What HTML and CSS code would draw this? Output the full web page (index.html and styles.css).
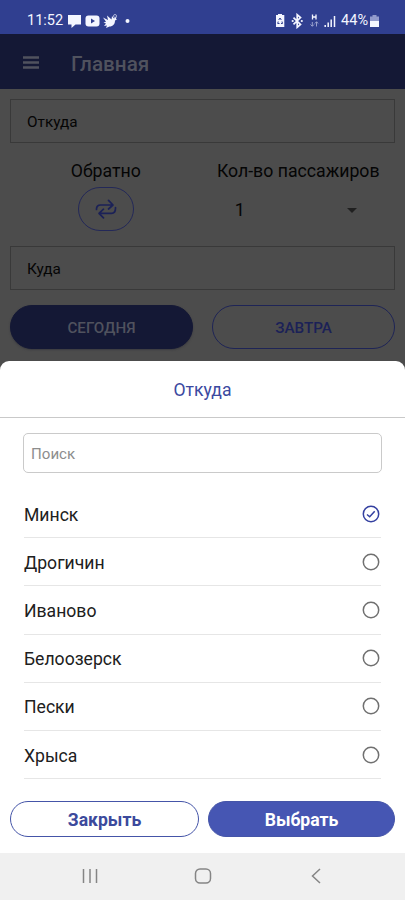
FILE: index.html
```html
<!DOCTYPE html>
<html lang="ru">
<head>
<meta charset="utf-8">
<meta name="viewport" content="width=device-width, initial-scale=1">
<title>Главная</title>
<link rel="stylesheet" href="styles.css">
</head>
<body>
<div class="screen">
  <div class="status">
    <span class="clock">11:52</span>
    <svg class="notices" width="64" height="16" viewBox="0 0 64 16">
      <path fill="#f4f6ff" d="M0 2h13v9.500H7.500L3.500 15v-3.500H0z"/>
      <rect x="17.500" y="2.500" width="14" height="11" rx="3" fill="#f4f6ff"/>
      <path fill="#303f90" d="M23 5.500v5l4-2.500z"/>
      <path fill="#f4f6ff" d="M35 4.500l5 2.500-1-4.500 4.500 4 .5-3.500 2 2.500 2.500-2-.5 2.500 1 .5-2 1c0 3.500-2 6-5.500 6L38 15l1-2.500-3 .5 2-2.500-2.500-1 2.500-.8z"/>
      <circle cx="47" cy="3" r="1.500" fill="none" stroke="#c8cee8" stroke-width=".8"/>
      <circle cx="59.500" cy="8" r="2" fill="#f4f6ff"/>
    </svg>
    <svg class="signals" width="64" height="16" viewBox="0 0 64 16">
      <path fill="#f4f6ff" d="M3 2h2V1h4v1h2.300v12H3z"/>
      <path fill="none" stroke="#303f90" stroke-width="1" d="M5.700 7L7 5l1.300 2M9 8.500l.5 2H8M6.500 10.500H4.700l.5-2"/>
      <path fill="none" stroke="#f4f6ff" stroke-width="1.700" d="M20.500 4.700l7 6.800-3.300 2.800V1.700l3.300 2.800-7 6.800"/>
      <circle cx="19.700" cy="8" r="1.100" fill="#f4f6ff"/><circle cx="28.800" cy="8" r="1.100" fill="#f4f6ff"/>
      <path fill="none" stroke="#f4f6ff" stroke-width="1.300" d="M39.500 1.500v5M43 1.500v5M39.500 4H43"/>
      <path fill="none" stroke="#a5add5" stroke-width=".9" d="M39.300 9v4M37.500 11.500l1.800 1.800 1.700-1.800M43.500 13.500V9M41.800 10.500l1.700-1.700 1.800 1.700"/>
      <path stroke="#f4f6ff" stroke-width="1.500" d="M52.200 12v2M55.200 9.500V14M58.200 6.500V14M61.500 3v11"/>
    </svg>
    <span class="percent">44%</span>
    <svg width="9" height="14" viewBox="0 0 9 14"><path fill="#929bcc" d="M0 2.500h2.500V1h4v1.500H9V7H0z"/><path fill="#f4f6ff" d="M0 7h9v6H0z"/></svg>
  </div>
  <header class="bar">
    <svg width="16" height="14" viewBox="0 0 16 14"><path stroke="#50525e" stroke-width="2.300" d="M0 1.500h16M0 6.500h16M0 11.500h16"/></svg>
    <h1>Главная</h1>
  </header>
  <main class="form">
    <div class="field"><span>Откуда</span></div>
    <div class="options">
      <div class="option">
        <span class="label">Обратно</span>
        <div class="swap">
          <svg width="22" height="22" viewBox="0 0 22 22" fill="none" stroke="#1b2157" stroke-width="1.700" stroke-linecap="round" stroke-linejoin="round"><path d="M1.500 11.500V11c0-2.500 1.500-4 4-4h11.800M13.500 2.300L18 7l-4.500 4M20.500 9.500v.8c0 3.200-1.500 5-4 5H4.700M8.500 11.200L4 15.300l4.500 4.500"/></svg>
        </div>
      </div>
      <div class="option count">
        <span class="label">Кол-во пассажиров</span>
        <div class="select"><span>1</span><svg width="10" height="5" viewBox="0 0 10 5"><path fill="#202020" d="M0 0h10L5 5z"/></svg></div>
      </div>
    </div>
    <div class="field"><span>Куда</span></div>
    <div class="days">
      <div class="day filled"><span>СЕГОДНЯ</span></div>
      <div class="day"><span>ЗАВТРА</span></div>
    </div>
  </main>
  <section class="sheet">
    <h2><span>Откуда</span></h2>
    <div class="search"><span>Поиск</span></div>
    <ul class="cities">
      <li><span>Минск</span><svg class="chosen" viewBox="0 0 18 18"><circle cx="9" cy="9" r="7.700"/><path d="M5 9.500l2.700 2.300 5-5.600"/></svg></li>
      <li><span>Дрогичин</span><svg viewBox="0 0 18 18"><circle cx="9" cy="9" r="7.700"/></svg></li>
      <li><span>Иваново</span><svg viewBox="0 0 18 18"><circle cx="9" cy="9" r="7.700"/></svg></li>
      <li><span>Белоозерск</span><svg viewBox="0 0 18 18"><circle cx="9" cy="9" r="7.700"/></svg></li>
      <li><span>Пески</span><svg viewBox="0 0 18 18"><circle cx="9" cy="9" r="7.700"/></svg></li>
      <li><span>Хрыса</span><svg viewBox="0 0 18 18"><circle cx="9" cy="9" r="7.700"/></svg></li>
    </ul>
    <div class="actions">
      <div class="action close"><span>Закрыть</span></div>
      <div class="action pick"><span>Выбрать</span></div>
    </div>
  </section>
  <nav class="system">
    <svg width="16" height="16" viewBox="0 0 16 16"><path stroke="#858585" stroke-width="1.500" d="M1.500 1v14M8 1v14M14.500 1v14"/></svg>
    <svg class="home" width="18" height="16" viewBox="0 0 18 16"><rect x="1.500" y="1" width="15" height="14" rx="4.500" fill="none" stroke="#858585" stroke-width="1.500"/></svg>
    <svg width="10" height="16" viewBox="0 0 10 16"><path fill="none" stroke="#858585" stroke-width="1.500" d="M9 1L1.500 8 9 15"/></svg>
  </nav>
</div>
</body>
</html>
```
FILE: styles.css
```css
* { box-sizing: border-box; }
body { margin: 0; font-family: Roboto, "Liberation Sans", sans-serif; background: #4c4c4c; }
h1, h2, ul { margin: 0; padding: 0; font-weight: 400; }
svg { display: block; flex: none; }
span { white-space: nowrap; }
.screen { width: 405px; height: 900px; display: flex; flex-direction: column; overflow: hidden; background: #4c4c4c; }
.status { height: 34px; flex: none; background: #303f90; color: #f4f6ff; display: flex; align-items: center; padding: 7px 26px 0 27px; font-size: 14.500px; }
.notices { margin-left: 5px; }
.signals { margin-left: auto; margin-right: 4px; }
.percent { margin-right: 2px; }
.bar { height: 55px; flex: none; background: #141835; display: flex; align-items: center; padding: 2px 0 0 23px; }
.bar h1 { margin-left: 32px; padding-top: 2px; font-size: 20.700px; font-weight: 500; color: #50525e; }
.form { height: 272px; flex: none; padding: 10px 10px 0; }
.field { height: 44px; border: 1px solid #393939; padding: 1px 0 0 16px; display: flex; align-items: center; font-size: 15.300px; color: #050505; }
.options { height: 103px; display: flex; }
.option { width: 192px; display: flex; flex-direction: column; align-items: center; }
.option.count { width: 194px; }
.label { height: 20px; margin-top: 18px; line-height: 20px; font-size: 17.700px; color: #050505; }
.swap { width: 56px; height: 44px; margin-top: 6px; border: 1px solid #232858; border-radius: 22px; display: flex; align-items: center; justify-content: center; }
.select { width: 122px; margin: 19px 5px 0 0; display: flex; align-items: center; justify-content: space-between; line-height: 20px; font-size: 18px; color: #050505; }
.days { display: flex; justify-content: space-between; margin-top: 15px; }
.day { width: 183px; height: 44px; border-radius: 22px; border: 1px solid #1e2456; display: flex; align-items: center; justify-content: center; padding-top: 1px; font-size: 15.200px; font-weight: 500; color: #1b2157; }
.day.filled { background: #141835; border-color: #141835; color: #50525e; box-shadow: 0 1px 2px #3a3a40; }
.sheet { height: 492px; flex: none; background: #fff; border-radius: 9px 9px 0 0; }
.sheet h2 { height: 57px; border-bottom: 1px solid #c9c9c9; display: flex; align-items: center; justify-content: center; padding-top: 1px; font-size: 17.600px; color: #3b499f; }
.search { height: 40px; margin: 15px 23px 0; border: 1px solid #cacaca; border-radius: 5px; display: flex; align-items: center; padding: 2px 0 0 7px; font-size: 15.100px; color: #8d8d8d; }
.cities { list-style: none; margin: 17px 24px 0; }
.cities li { height: 48.200px; border-bottom: 1px solid #e6e6e6; display: flex; align-items: center; justify-content: space-between; font-size: 17.600px; color: #202020; }
.cities span { padding-top: 2px; }
.cities svg { width: 18px; height: 18px; margin-right: 1px; fill: none; stroke: #707070; stroke-width: 1.500; }
.cities .chosen { stroke: #3440a0; }
.actions { display: flex; justify-content: space-between; padding: 0 10px; margin-top: 22px; }
.action { height: 36px; border: 1px solid #4555a8; border-radius: 18px; display: flex; align-items: center; justify-content: center; font-size: 17.600px; font-weight: 700; padding-top: 1px; }
.close { width: 189px; color: #3c4a9c; }
.pick { width: 187px; background: #4656b3; color: #fff; }
.system { height: 47px; flex: none; background: #f0f0f0; display: flex; justify-content: space-between; align-items: center; padding: 0 84px 2px 82px; }
.home { margin-right: 4px; }
```
